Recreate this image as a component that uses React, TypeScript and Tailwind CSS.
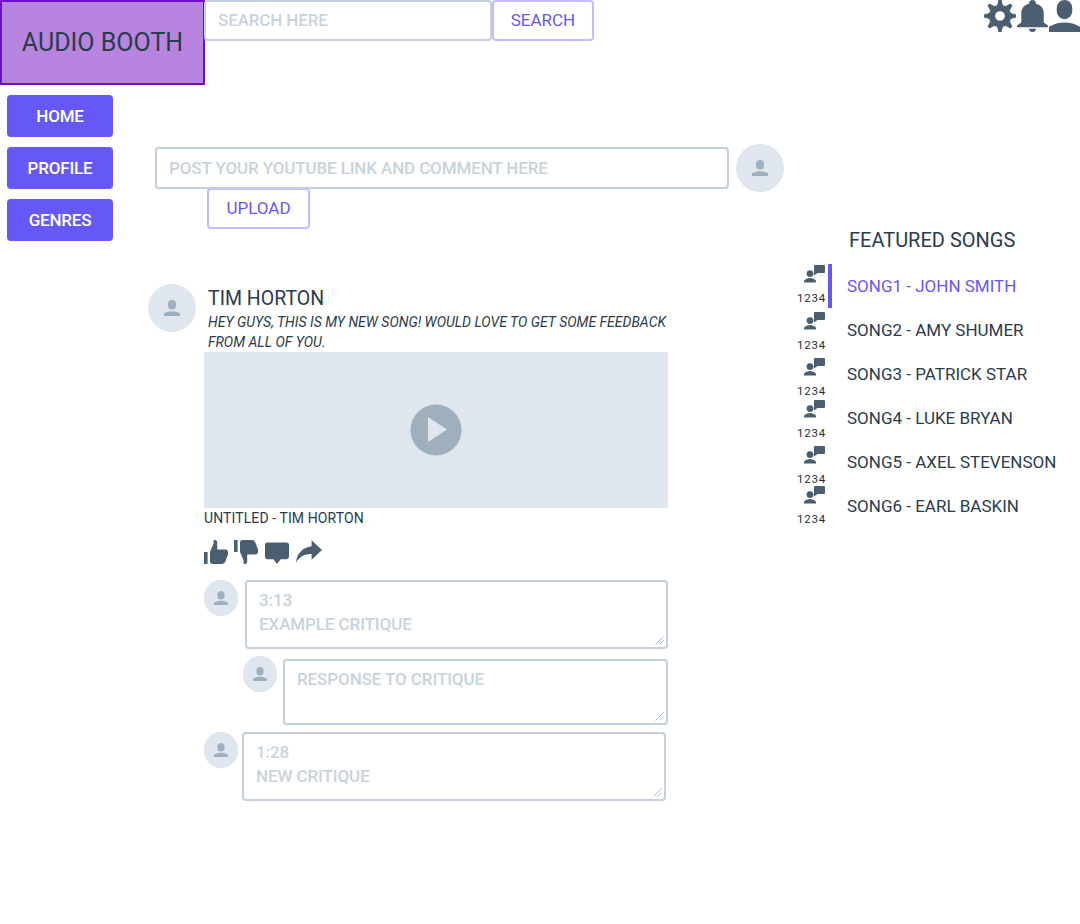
import React from "react";

const P = {
  cog: "M3.94 6.5L2.22 3.64l1.42-1.42L6.5 3.94c.52-.3 1.1-.54 1.7-.7L9 0h2l.8 3.24c.6.16 1.18.4 1.7.7l2.86-1.72 1.42 1.42-1.72 2.86c.3.52.54 1.1.7 1.7L20 9v2l-3.24.8c-.16.6-.4 1.18-.7 1.7l1.72 2.86-1.42 1.42-2.86-1.72c-.52.3-1.1.54-1.7.7L11 20H9l-.8-3.24c-.6-.16-1.18-.4-1.7-.7l-2.86 1.72-1.42-1.42 1.72-2.86c-.3-.52-.54-1.1-.7-1.7L0 11V9l3.24-.8c.16-.6.4-1.18.7-1.7zM10 13a3 3 0 1 0 0-6 3 3 0 0 0 0 6z",
  bell: "M3.500 8a6.500 6 0 0 1 4.530-5.670 2 2 0 1 1 3.950 0A6.500 6 0 0 1 16.500 8v6l2.500 2v1H1v-1l2.500-2V8zm8.500 10a2 2 0 1 1-4 0h4z",
  user: "M5 5a5 5 0 0 1 10 0v2A5 5 0 0 1 5 7V5zM0 16.68A19.9 19.9 0 0 1 10 14c3.64 0 7.06.97 10 2.68V20H0v-3.32z",
  up: "M11 0h1v3l3 7v8a2 2 0 0 1-2 2H5c-1.1 0-2.31-.84-2.7-1.88L0 12v-2a2 2 0 0 1 2-2h7V2a2 2 0 0 1 2-2zm6 10h3v10h-3V10z",
  down: "M11 20a2 2 0 0 1-2-2v-6H2a2 2 0 0 1-2-2V8l2.3-6.12A3.11 3.11 0 0 1 5 0h8a2 2 0 0 1 2 2v8l-3 7v3h-1zm6-10V0h3v10h-3z",
  chat: "M2 2h16a2 2 0 0 1 2 2v10a2 2 0 0 1-2 2h-5l-3 4-3-4H2a2 2 0 0 1-2-2V4a2 2 0 0 1 2-2z",
  share: "M12 1l8 7.5-8 7.5v-4.5C7 11.5 3 13 0 18c.7-7 5-11.5 12-12.5V1z",
};

function Icon({ d, className, box = "0 0 20 20", stretch }: { d: string; className: string; box?: string; stretch?: boolean }) {
  return (
    <svg viewBox={box} preserveAspectRatio={stretch ? "none" : undefined} fill="currentColor" className={className}>
      <path d={d} />
    </svg>
  );
}

function Avatar({ big, className = "" }: { big?: boolean; className?: string }) {
  return (
    <div
      className={`flex shrink-0 items-center justify-center rounded-full bg-[#dfe6ed] text-[#a0afbc] ${
        big ? "h-12 w-12" : "h-[36px] w-[34px]"
      } ${className}`}
    >
      <Icon d={P.user} className={big ? "h-4 w-4" : "h-[14px] w-[14px]"} />
    </div>
  );
}

function Note({ className }: { className: string }) {
  return (
    <div className={`flex flex-col items-start text-[#1f2d3a] ${className}`}>
      <svg viewBox="0 0 22 20" fill="#4a5e70" className="ml-[6px] h-[20px] w-[22px]">
        <circle cx="7" cy="8.6" r="3.4" />
        <path d="M1 17.5v-1.8c1.6-2 3.6-2.8 6-2.8s4.4.8 6 2.8v1.8z" />
        <path d="M11 1a1 1 0 0 1 1-1h9a1 1 0 0 1 1 1v6a1 1 0 0 1-1 1h-6.5L11 10.5V7.500z" />
      </svg>
      <span className="mt-[7px] text-[11.5px] leading-[13px] tracking-[0.8px]">1234</span>
    </div>
  );
}

function Box({ placeholder, className }: { placeholder: string; className: string }) {
  return (
    <div className={`relative ${className}`}>
      <textarea
        placeholder={placeholder}
        className="block h-full w-full resize-none rounded border-2 border-[#c4d0dc] bg-white px-3 py-[6px] text-[17px] leading-6 tracking-[-0.1px] outline-none placeholder:font-medium placeholder:text-[#c8d3de]"
      />
      <svg viewBox="0 0 9 9" className="absolute bottom-[4px] right-[4px] h-[9px] w-[9px]" stroke="#9aa8b5" strokeWidth="0.8">
        <path d="M0.500 8.500L8.500 0.500M4.500 8.500L8.500 4.500" />
      </svg>
    </div>
  );
}

const field =
  "rounded border-2 border-[#c4d0dc] bg-white px-3 pb-[1px] text-[17px] font-medium tracking-[-0.13px] outline-none placeholder:text-[#c8d3de]";
const ghost =
  "rounded border-2 border-[#c3bdfc] bg-white pb-[2px] text-[17px] leading-6 text-[#6658f6]";

const songs = [
  "SONG1 - JOHN SMITH",
  "SONG2 - AMY SHUMER",
  "SONG3 - PATRICK STAR",
  "SONG4 - LUKE BRYAN",
  "SONG5 - AXEL STEVENSON",
  "SONG6 - EARL BASKIN",
];

export default function App() {
  return (
    <div className="h-[924px] w-[1080px] overflow-hidden bg-white font-['Roboto',sans-serif] text-[#2a3b4c]">
      <header className="flex h-[85px] items-start">
        <div className="flex h-[85px] w-[205px] shrink-0 items-center justify-center border-2 border-[#6f10c4] bg-[#b785e0] pt-[1px] text-[25px]">
          AUDIO BOOTH
        </div>
        <input placeholder="SEARCH HERE" className={`${field} -ml-px h-[41px] w-[288px]`} />
        <button className={`${ghost} h-[41px] w-[102px]`}>SEARCH</button>
        <div className="ml-auto flex text-[#4a5e70]">
          <Icon d={P.cog} className="mr-px h-8 w-8" />
          <Icon d={P.bell} box="1 0 18 20" stretch className="h-8 w-[31px]" />
          <Icon d={P.user} className="ml-px h-8 w-[31px]" box="0 0 20 20" stretch />
        </div>
      </header>

      <div className="flex">
        <nav className="flex w-[148px] shrink-0 flex-col gap-[10px] pl-[7px] pt-[10px]">
          {["HOME", "PROFILE", "GENRES"].map((n) => (
            <div
              key={n}
              className="flex h-[42px] w-[106px] items-center justify-center rounded bg-[#6658f6] pt-[1px] text-[17px] font-medium tracking-[-0.2px] text-white"
            >
              {n}
            </div>
          ))}
        </nav>

        <main className="w-[640px] shrink-0">
          <div className="mt-[59px] flex items-center">
            <input
              placeholder="POST YOUR YOUTUBE LINK AND COMMENT HERE"
              className={`${field} ml-[7px] h-[42px] w-[574px]`}
            />
            <Avatar big className="ml-[7px]" />
          </div>
          <button className={`${ghost} -mt-[4px] ml-[59px] block h-[41px] w-[103px]`}>UPLOAD</button>

          <article className="mt-[55px] flex">
            <Avatar big />
            <div className="ml-2 w-[464px]">
              <h2 className="ml-1 pt-[3px] text-[19.500px] leading-6">TIM HORTON</h2>
              <p className="ml-1 w-[462px] pt-[1px] text-sm italic leading-5">
                HEY GUYS, THIS IS MY NEW SONG! WOULD LOVE TO GET SOME FEEDBACK FROM ALL OF YOU.
              </p>
              <div className="flex h-[156px] w-[464px] items-center justify-center bg-[#dfe6ed]">
                <svg viewBox="0 0 52 52" className="h-[52px] w-[52px]">
                  <circle cx="26" cy="26" r="25.500" fill="#a0afbc" />
                  <path d="M18 13l19 12.500-19 12.500z" fill="#dfe6ed" />
                </svg>
              </div>
              <p className="text-sm leading-5 tracking-[0.1px]">UNTITLED - TIM HORTON</p>
              <div className="mt-[10px] flex h-[27px] items-center text-[#4a5e70]">
                <Icon d={P.up} className="h-6 w-6 -scale-x-100" />
                <Icon d={P.down} className="ml-[6px] h-6 w-6 -scale-x-100" />
                <Icon d={P.chat} className="ml-[7px] h-6 w-6" />
                <Icon d={P.share} className="ml-[7px] h-[26px] w-[26px]" />
              </div>

              <div className="mt-[15px] flex items-start">
                <Avatar />
                <Box placeholder={"3:13\nEXAMPLE CRITIQUE"} className="ml-[7px] h-[69px] w-[424px]" />
              </div>
              <div className="mt-[7px] flex items-start">
                <Avatar className="ml-[39px]" />
                <Box placeholder="RESPONSE TO CRITIQUE" className="ml-[6px] mt-[3px] h-[66px] w-[386px]" />
              </div>
              <div className="mt-[7px] flex items-start">
                <Avatar />
                <Box placeholder={"1:28\nNEW CRITIQUE"} className="ml-[4px] h-[69px] w-[424px]" />
              </div>
            </div>
          </article>
        </main>

        <aside className="shrink-0">
          <h3 className="ml-[61px] mt-[143px] text-xl leading-6">FEATURED SONGS</h3>
          <div className="mt-[12px] flex">
            <div className="ml-[9px] w-[31px]">
              <Note className="mt-[1px]" />
              <Note className="mt-[7px]" />
              <Note className="mt-[6px]" />
              <Note className="mt-[2px]" />
              <Note className="mt-[6px]" />
              <Note className="mt-0" />
            </div>
            <ul className="text-[17px]">
              {songs.map((s, i) => (
                <li
                  key={s}
                  className={`flex h-[44px] items-center border-l-4 pl-[15px] pt-[2px] ${
                    i === 0 ? "border-[#6658f6] text-[#6658f6]" : "border-transparent"
                  }`}
                >
                  {s}
                </li>
              ))}
            </ul>
          </div>
        </aside>
      </div>
    </div>
  );
}
